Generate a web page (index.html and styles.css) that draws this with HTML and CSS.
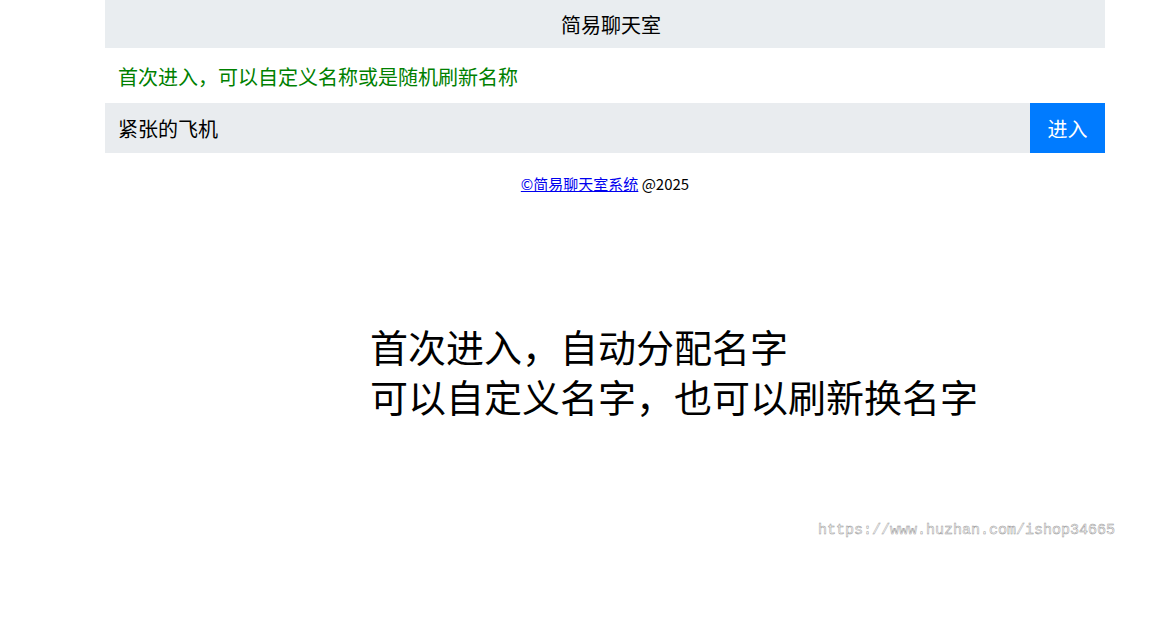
FILE: index.html
```html
<!DOCTYPE html>
<html lang="zh-CN">
<head>
<meta charset="utf-8">
<title>简易聊天室</title>
<link rel="stylesheet" href="styles.css">
</head>
<body>
<div class="page">
  <header class="header">简易聊天室</header>
  <p class="tip">首次进入，可以自定义名称或是随机刷新名称</p>
  <div class="entry">
    <div class="name">紧张的飞机</div>
    <button class="enter">进入</button>
  </div>
  <footer class="footer"><a href="#">©简易聊天室系统</a> @2025</footer>
</div>
<div class="intro">
  <div>首次进入，自动分配名字</div>
  <div>可以自定义名字，也可以刷新换名字</div>
</div>
<div class="watermark">https://www.huzhan.com/ishop34665</div>
</body>
</html>
```
FILE: styles.css
```css
html, body {
  margin: 0;
  padding: 0;
  background: #fff;
  font-family: "Noto Sans CJK SC", "Noto Sans", sans-serif;
  color: #000;
}
.page {
  width: 1000px;
  margin-left: 105px;
}
.header {
  height: 48px;
  background: #e9edf0;
  display: flex;
  align-items: center;
  justify-content: center;
  padding-left: 12px;
  font-size: 20px;
  box-sizing: border-box;
}
.tip {
  margin: 0;
  height: 55px;
  display: flex;
  align-items: center;
  padding-left: 13px;
  padding-top: 2px;
  box-sizing: border-box;
  font-size: 20px;
  color: #008000;
}
.entry {
  display: flex;
  height: 50px;
  background: #e9ecef;
}
.name {
  flex: 1;
  display: flex;
  align-items: center;
  padding-left: 13px;
  font-size: 20px;
}
.enter {
  width: 75px;
  border: 0;
  margin: 0;
  background: #007bff;
  color: #fff;
  font-family: inherit;
  font-size: 20px;
  padding: 0;
}
.footer {
  text-align: center;
  font-size: 15px;
  margin-top: 20px;
  line-height: 22px;
}
.footer a {
  color: #0000ee;
}
.intro {
  margin-top: 126px;
  margin-left: 370px;
  font-size: 38px;
  line-height: 50px;
}
.watermark {
  position: absolute;
  left: 818px;
  top: 522px;
  font-family: "Liberation Mono", monospace;
  font-size: 15px;
  color: #fff;
  -webkit-text-stroke: 0.5px #999;
}
```
